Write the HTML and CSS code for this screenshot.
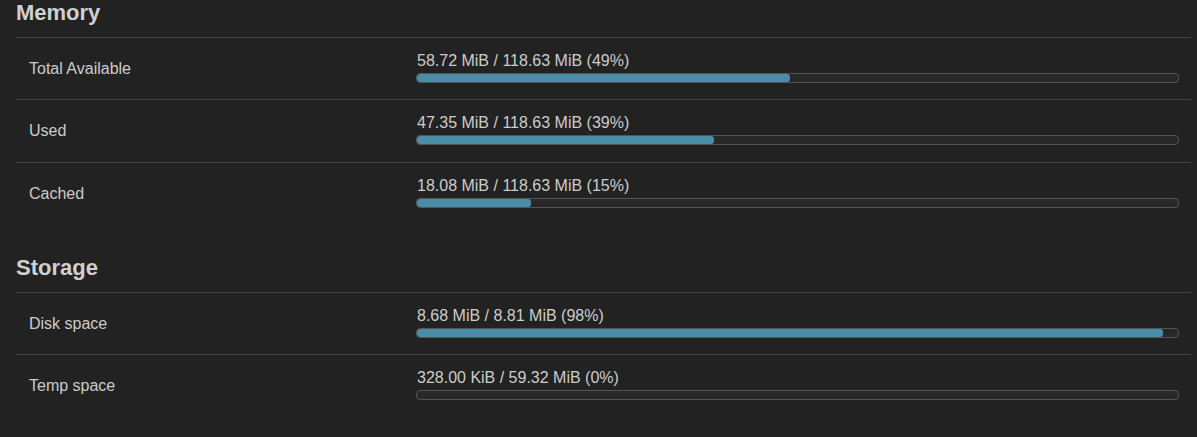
FILE: index.html
```html
<!DOCTYPE html>
<html>
<head>
<meta charset="utf-8">
<link rel="stylesheet" href="styles.css">
</head>
<body>
<div class="page">
  <section class="section">
    <h3 class="heading">Memory</h3>
    <div class="table">
      <div class="row">
        <div class="label">Total Available</div>
        <div class="value">
          <div class="vtext">58.72 MiB / 118.63 MiB (49%)</div>
          <div class="bar"><div class="fill" style="width:49%"></div></div>
        </div>
      </div>
      <div class="row tall">
        <div class="label">Used</div>
        <div class="value">
          <div class="vtext">47.35 MiB / 118.63 MiB (39%)</div>
          <div class="bar"><div class="fill" style="width:39%"></div></div>
        </div>
      </div>
      <div class="row">
        <div class="label">Cached</div>
        <div class="value">
          <div class="vtext">18.08 MiB / 118.63 MiB (15%)</div>
          <div class="bar"><div class="fill" style="width:15%"></div></div>
        </div>
      </div>
    </div>
  </section>
  <section class="section">
    <h3 class="heading">Storage</h3>
    <div class="table">
      <div class="row">
        <div class="label">Disk space</div>
        <div class="value">
          <div class="vtext">8.68 MiB / 8.81 MiB (98%)</div>
          <div class="bar"><div class="fill" style="width:98%"></div></div>
        </div>
      </div>
      <div class="row">
        <div class="label">Temp space</div>
        <div class="value">
          <div class="vtext">328.00 KiB / 59.32 MiB (0%)</div>
          <div class="bar"><div class="fill" style="width:0%"></div></div>
        </div>
      </div>
    </div>
  </section>
</div>
</body>
</html>
```
FILE: styles.css
```css
html, body {
  margin: 0;
  padding: 0;
  background: #222222;
  height: 100%;
  overflow: hidden;
}
body {
  font-family: "Liberation Sans", Arial, sans-serif;
  color: #cccccc;
}
.page {
  width: 1175px;
  padding-left: 16px;
}
.section + .section {
  margin-top: 32px;
}
.heading {
  margin: 1px 0 12px 0;
  font-size: 22px;
  line-height: 24px;
  font-weight: bold;
  color: #d0d0d0;
}
.row {
  display: grid;
  grid-template-columns: 400px 763px;
  align-items: start;
  height: 62px;
  box-sizing: border-box;
  border-top: 1px solid #444444;
}
.row.tall {
  height: 63px;
}
.label {
  padding-left: 13px;
  padding-top: 21px;
  font-size: 16px;
  line-height: 20px;
}
.value {
  display: flex;
  flex-direction: column;
  padding-top: 13px;
}
.vtext {
  font-size: 16px;
  line-height: 20px;
  padding-left: 1px;
}
.bar {
  margin-top: 2px;
  height: 10px;
  box-sizing: border-box;
  border: 1px solid #555555;
  border-radius: 4px;
  background: #282828;
  overflow: hidden;
}
.fill {
  height: 100%;
  background: #4a8da8;
  border-radius: 3px;
}
```
